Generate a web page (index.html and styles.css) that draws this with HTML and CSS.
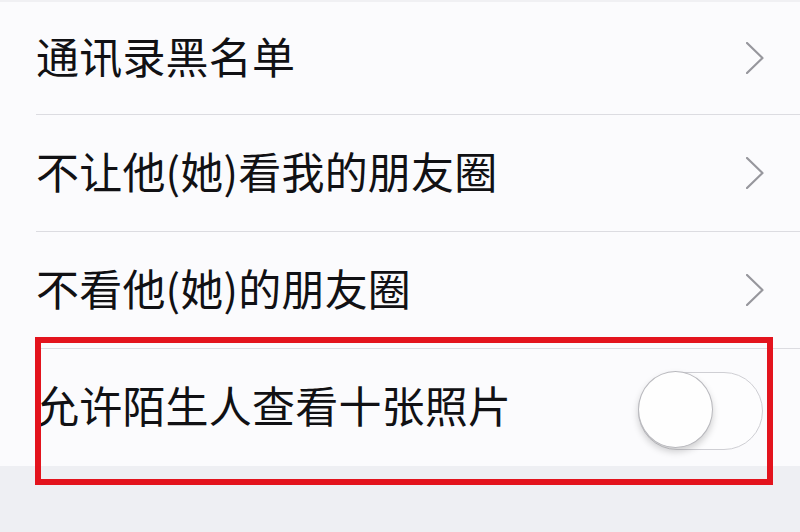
FILE: index.html
```html
<!DOCTYPE html>
<html lang="zh-CN">
<head>
<meta charset="utf-8">
<link rel="stylesheet" href="styles.css">
</head>
<body>
<div class="page">
  <ul class="list">
    <li class="row row-first">
      <div class="row-inner">
        <span class="label">通讯录黑名单</span>
        <svg class="chev" viewBox="0 0 18 32" width="18" height="32"><polyline points="1,1 16.5,16 1,31" fill="none" stroke="#97979d" stroke-width="2.2" stroke-linecap="round" stroke-linejoin="round"/></svg>
      </div>
    </li>
    <li class="row">
      <div class="row-inner">
        <span class="label">不让他(她)看我的朋友圈</span>
        <svg class="chev" viewBox="0 0 18 32" width="18" height="32"><polyline points="1,1 16.5,16 1,31" fill="none" stroke="#97979d" stroke-width="2.2" stroke-linecap="round" stroke-linejoin="round"/></svg>
      </div>
    </li>
    <li class="row">
      <div class="row-inner">
        <span class="label">不看他(她)的朋友圈</span>
        <svg class="chev" viewBox="0 0 18 32" width="18" height="32"><polyline points="1,1 16.5,16 1,31" fill="none" stroke="#97979d" stroke-width="2.2" stroke-linecap="round" stroke-linejoin="round"/></svg>
      </div>
    </li>
    <li class="row row-last">
      <div class="row-inner">
        <span class="label">允许陌生人查看十张照片</span>
        <span class="toggle"><span class="knob"></span></span>
      </div>
    </li>
  </ul>
  <div class="footer"></div>
  <div class="highlight"></div>
</div>
</body>
</html>
```
FILE: styles.css
```css
html, body {
  margin: 0;
  padding: 0;
}
body {
  width: 800px;
  height: 532px;
  overflow: hidden;
  background: #eeeff3;
  font-family: "Noto Sans CJK SC", "Noto Sans", sans-serif;
}
.page {
  position: relative;
  width: 800px;
  height: 532px;
}
.list {
  list-style: none;
  margin: 0;
  padding: 0;
  background: #fbfbfd;
  border-top: 2px solid #f0f0f3;
}
.row {
  height: 117px;
  padding-left: 36px;
  box-sizing: border-box;
}
.row-first {
  height: 113px;
}
.row-inner {
  height: 100%;
  box-sizing: border-box;
  display: flex;
  align-items: center;
  justify-content: space-between;
  padding-right: 37px;
  border-bottom: 1px solid #dcdce1;
}
.row-last .row-inner {
  border-bottom: none;
}
.label {
  font-size: 43px;
  color: #111114;
  line-height: 1;
  letter-spacing: 0.2px;
  margin-top: -6px;
}
.chev {
  display: block;
  margin-right: -1px;
}
.toggle {
  position: relative;
  display: block;
  width: 125px;
  height: 78px;
  box-sizing: border-box;
  border: 1.5px solid #cfcfd4;
  border-radius: 39px;
  background: #fdfdfe;
  margin-top: 6px;
}
.knob {
  position: absolute;
  left: -1.5px;
  top: -1.5px;
  width: 75px;
  height: 77px;
  box-sizing: border-box;
  border-radius: 50%;
  background: #fefefe;
  border: 1.5px solid #b8b8bd;
  box-shadow: 0 4px 7px rgba(0, 0, 0, 0.18);
}
.footer {
  height: 66px;
  background: #eeeff3;
}
.highlight {
  position: absolute;
  left: 35px;
  top: 337px;
  width: 738px;
  height: 148px;
  box-sizing: border-box;
  border: 6px solid #e3131d;
}
```
